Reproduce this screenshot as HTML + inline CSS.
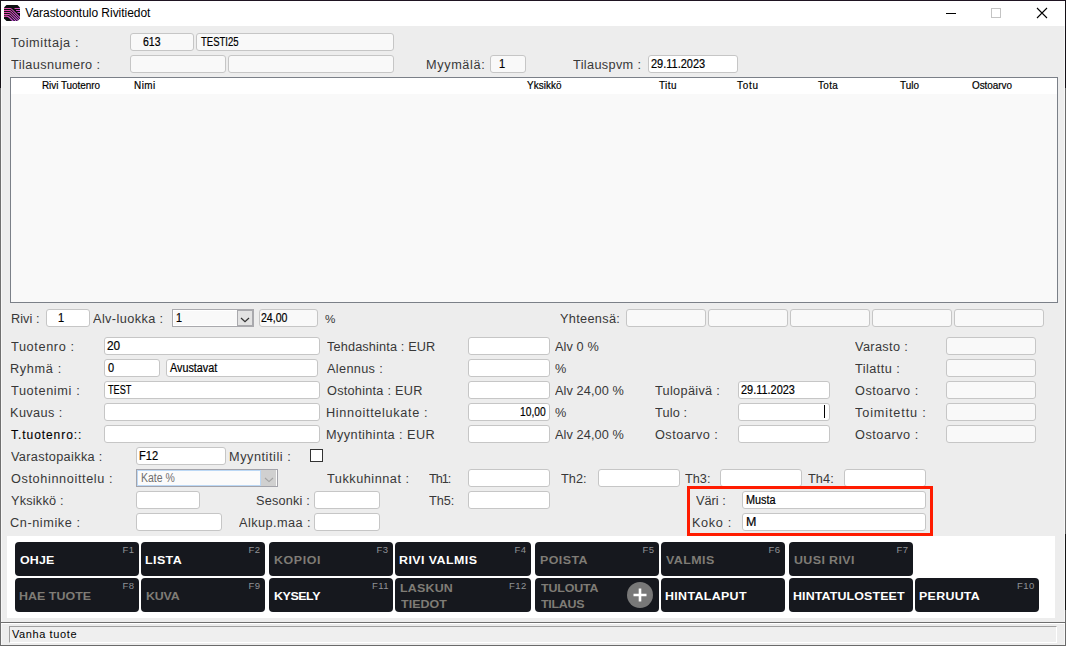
<!DOCTYPE html><html><head><meta charset="utf-8"><style>
html,body{margin:0;padding:0;}
body{width:1066px;height:646px;position:relative;overflow:hidden;background:#ededed;font-family:"Liberation Sans",sans-serif;}
.t{position:absolute;white-space:pre;}
.f{position:absolute;border:1px solid #c6c6c6;box-sizing:content-box;}
.b{position:absolute;background:#16181e;border-radius:4px;}
.a{position:absolute;}
</style></head><body>
<div class="a" style="left:0;top:0;width:1066px;height:26px;background:#fff"></div>
<div class="a" style="left:0;top:0;width:1066px;height:1px;background:#1f1422"></div>
<div class="a" style="left:0;top:0;width:1px;height:646px;background:#707070"></div>
<div class="a" style="left:0;top:0;width:1px;height:88px;background:#141016"></div>
<div class="a" style="left:1065px;top:0;width:1px;height:646px;background:#6a6a6a"></div>
<div class="a" style="left:1065px;top:0;width:1px;height:88px;background:#141016"></div>
<div class="a" style="left:1065px;top:534px;width:1px;height:76px;background:#151515"></div>
<div class="a" style="left:0;top:645px;width:1066px;height:1px;background:#6a6a6a"></div>
<div class="a" style="left:1px;top:26px;width:1px;height:619px;background:#f7f7f7"></div>
<div class="a" style="left:1064px;top:26px;width:1px;height:619px;background:#f7f7f7"></div>
<svg class="a" style="left:4px;top:5px" width="16" height="16" viewBox="0 0 16 16">
<defs><linearGradient id="g" x1="0" y1="0" x2="1" y2="0"><stop offset="0" stop-color="#e54aa0"/><stop offset="1" stop-color="#c95ae6"/></linearGradient>
<clipPath id="c"><path d="M2.5 0H13.5L16 2.5V13.5L13.5 16H2.5L0 13.5V2.5Z"/></clipPath></defs>
<path d="M2.5 0H13.5L16 2.5V13.5L13.5 16H2.5L0 13.5V2.5Z" fill="#0e0f12"/>
<g clip-path="url(#c)" stroke="url(#g)" stroke-width="1.05" fill="none">
<path d="M0 3.5H6Q7 3.5 8 4.5L20 16.5"/>
<path d="M0 5.5H5.5Q6.5 5.5 7.5 6.5L17.5 16.5"/>
<path d="M0 7.5H5Q6 7.5 7 8.5L15 16.5"/>
<path d="M0 9.5H4.5Q5.5 9.5 6.5 10.5L12.5 16.5"/>
<path d="M0 11.5Q3 10.5 5.5 12.5L9.5 16.5" stroke-width="1.3"/>
<path d="M10.5 3.5H16M12 5.5H16M13.5 7.5H16"/>
</g></svg>
<div class="a" style="left:946px;top:13px;width:10px;height:1px;background:#000"></div>
<div class="a" style="left:991px;top:8px;width:8px;height:8px;border:1px solid #c4c4c4"></div>
<svg class="a" style="left:1036px;top:7px" width="12" height="12" viewBox="0 0 12 12"><path d="M1 1L11 11M11 1L1 11" stroke="#000" stroke-width="1.1"/></svg>
<div class="f" style="left:130px;top:33px;width:62px;height:16px;background:#f9f9f9;border-radius:3px"></div>
<div class="f" style="left:196px;top:33px;width:196px;height:16px;background:#f9f9f9;border-radius:3px"></div>
<div class="f" style="left:130px;top:55px;width:94px;height:16px;background:#f9f9f9;border-radius:3px"></div>
<div class="f" style="left:228px;top:55px;width:164px;height:16px;background:#f9f9f9;border-radius:3px"></div>
<div class="f" style="left:490px;top:55px;width:34px;height:16px;background:#f9f9f9;border-radius:3px"></div>
<div class="f" style="left:648px;top:55px;width:88px;height:16px;background:#fff;border-radius:3px"></div>
<div class="a" style="left:10px;top:77px;width:1046px;height:224px;border:1px solid #7b8088;background:#f9f9f9"></div>
<div class="a" style="left:11px;top:78px;width:1046px;height:16px;background:#fff"></div>
<div class="f" style="left:46px;top:309px;width:42px;height:16px;background:#fff;border-radius:3px"></div>
<div class="a" style="left:172px;top:309px;width:80px;height:16px;border:1px solid #a9a9ad;background:#fff"></div>
<div class="a" style="left:174px;top:311px;width:63px;height:14px;background:#f9f9f9"></div>
<div class="a" style="left:237px;top:310px;width:14px;height:14px;border:1px solid #a9a9ad;background:#e3e3e3"></div>
<svg class="a" style="left:239px;top:314px" width="12" height="10" viewBox="0 0 12 10"><path d="M2 4L6 7.6L10 4" stroke="#333" stroke-width="1.25" fill="none"/></svg>
<div class="f" style="left:259px;top:309px;width:57px;height:16px;background:#f9f9f9;border-radius:3px"></div>
<div class="f" style="left:626px;top:309px;width:78px;height:16px;background:#f9f9f9;border-radius:3px"></div>
<div class="f" style="left:708px;top:309px;width:78px;height:16px;background:#f9f9f9;border-radius:3px"></div>
<div class="f" style="left:790px;top:309px;width:78px;height:16px;background:#f9f9f9;border-radius:3px"></div>
<div class="f" style="left:872px;top:309px;width:78px;height:16px;background:#f9f9f9;border-radius:3px"></div>
<div class="f" style="left:954px;top:309px;width:88px;height:16px;background:#f9f9f9;border-radius:3px"></div>
<div class="f" style="left:104px;top:337px;width:214px;height:16px;background:#fff;border-radius:3px"></div>
<div class="f" style="left:104px;top:359px;width:54px;height:16px;background:#fff;border-radius:3px"></div>
<div class="f" style="left:166px;top:359px;width:150px;height:16px;background:#fff;border-radius:3px"></div>
<div class="f" style="left:104px;top:381px;width:214px;height:16px;background:#fff;border-radius:3px"></div>
<div class="f" style="left:104px;top:403px;width:214px;height:16px;background:#fff;border-radius:3px"></div>
<div class="f" style="left:104px;top:425px;width:214px;height:16px;background:#fff;border-radius:3px"></div>
<div class="f" style="left:136px;top:447px;width:88px;height:16px;background:#fff;border-radius:3px"></div>
<div class="a" style="left:310px;top:449px;width:11px;height:11px;border:1px solid #333;background:#fff"></div>
<div class="a" style="left:136px;top:469px;width:140px;height:16px;border:1px solid #a3a3aa;background:#fbfbfb"></div>
<div class="a" style="left:137px;top:470px;width:122px;height:14px;border:1px solid #bcd8f5"></div>
<div class="a" style="left:261px;top:470px;width:15px;height:16px;background:#d0d0d0"></div>
<svg class="a" style="left:263px;top:474px" width="12" height="10" viewBox="0 0 12 10"><path d="M2 4L6 7.6L10 4" stroke="#a2a2a2" stroke-width="1.1" fill="none"/></svg>
<div class="f" style="left:136px;top:491px;width:62px;height:16px;background:#fff;border-radius:3px"></div>
<div class="f" style="left:136px;top:513px;width:84px;height:16px;background:#fff;border-radius:3px"></div>
<div class="f" style="left:314px;top:491px;width:64px;height:16px;background:#fff;border-radius:3px"></div>
<div class="f" style="left:314px;top:513px;width:64px;height:16px;background:#fff;border-radius:3px"></div>
<div class="f" style="left:468px;top:337px;width:80px;height:16px;background:#fff;border-radius:3px"></div>
<div class="f" style="left:468px;top:359px;width:80px;height:16px;background:#fff;border-radius:3px"></div>
<div class="f" style="left:468px;top:381px;width:80px;height:16px;background:#fff;border-radius:3px"></div>
<div class="f" style="left:468px;top:403px;width:80px;height:16px;background:#fff;border-radius:3px"></div>
<div class="f" style="left:468px;top:425px;width:80px;height:16px;background:#fff;border-radius:3px"></div>
<div class="f" style="left:468px;top:469px;width:80px;height:16px;background:#fff;border-radius:3px"></div>
<div class="f" style="left:468px;top:491px;width:80px;height:16px;background:#fff;border-radius:3px"></div>
<div class="f" style="left:598px;top:469px;width:80px;height:16px;background:#fff;border-radius:3px"></div>
<div class="f" style="left:720px;top:469px;width:80px;height:16px;background:#fff;border-radius:3px"></div>
<div class="f" style="left:844px;top:469px;width:80px;height:16px;background:#fff;border-radius:3px"></div>
<div class="f" style="left:738px;top:381px;width:90px;height:16px;background:#fff;border-radius:3px"></div>
<div class="f" style="left:738px;top:403px;width:90px;height:16px;background:#fff;border-radius:3px"></div>
<div class="a" style="left:824px;top:405px;width:1px;height:13px;background:#000"></div>
<div class="f" style="left:738px;top:425px;width:90px;height:16px;background:#fff;border-radius:3px"></div>
<div class="f" style="left:946px;top:337px;width:88px;height:16px;background:#f9f9f9;border-radius:3px"></div>
<div class="f" style="left:946px;top:359px;width:88px;height:16px;background:#f9f9f9;border-radius:3px"></div>
<div class="f" style="left:946px;top:381px;width:88px;height:16px;background:#f9f9f9;border-radius:3px"></div>
<div class="f" style="left:946px;top:403px;width:88px;height:16px;background:#f9f9f9;border-radius:3px"></div>
<div class="f" style="left:946px;top:425px;width:88px;height:16px;background:#f9f9f9;border-radius:3px"></div>
<div class="f" style="left:742px;top:491px;width:182px;height:16px;background:#fff;border-radius:3px"></div>
<div class="f" style="left:742px;top:513px;width:182px;height:16px;background:#fff;border-radius:3px"></div>
<div class="a" style="left:7px;top:536px;width:1048px;height:82px;background:#fff"></div>
<div class="a" style="left:687px;top:486px;width:240px;height:44px;border:3px solid #ff1c00"></div>
<div class="b" style="left:15px;top:542px;width:124px;height:34px"></div>
<div class="b" style="left:141px;top:542px;width:124px;height:34px"></div>
<div class="b" style="left:269px;top:542px;width:124px;height:34px"></div>
<div class="b" style="left:395px;top:542px;width:136px;height:34px"></div>
<div class="b" style="left:535px;top:542px;width:124px;height:34px"></div>
<div class="b" style="left:661px;top:542px;width:124px;height:34px"></div>
<div class="b" style="left:789px;top:542px;width:124px;height:34px"></div>
<div class="b" style="left:15px;top:578px;width:124px;height:34px"></div>
<div class="b" style="left:141px;top:578px;width:124px;height:34px"></div>
<div class="b" style="left:269px;top:578px;width:124px;height:34px"></div>
<div class="b" style="left:395px;top:578px;width:136px;height:34px"></div>
<div class="b" style="left:535px;top:578px;width:124px;height:34px"></div>
<svg class="a" style="left:627px;top:582px" width="26" height="26" viewBox="0 0 26 26"><circle cx="13" cy="13" r="13" fill="#787878"/><path d="M13 6.5V19.5M6.5 13H19.5" stroke="#fff" stroke-width="2.6"/></svg>
<div class="b" style="left:661px;top:578px;width:124px;height:34px"></div>
<div class="b" style="left:789px;top:578px;width:124px;height:34px"></div>
<div class="b" style="left:915px;top:578px;width:124px;height:34px"></div>
<div class="a" style="left:1px;top:622px;width:1064px;height:1px;background:#6e6e6e"></div>
<div class="a" style="left:1px;top:623px;width:1064px;height:1px;background:#fff"></div>
<div class="a" style="left:9px;top:626px;width:1046px;height:15px;background:#efefef;border-top:1px solid #a0a0a0;border-left:1px solid #a0a0a0;border-right:1px solid #fff;border-bottom:1px solid #fff"></div>
<div class="t" style="left:25.30px;top:6.00px;font-size:12px;line-height:15px;color:#000;letter-spacing:-0.030px;">Varastoontulo Rivitiedot</div>
<div class="t" style="left:11.30px;top:36.00px;font-size:12px;line-height:15px;color:#383838;letter-spacing:0.569px;transform:scaleX(1.0600);transform-origin:0 0;">Toimittaja :</div>
<div class="t" style="left:142.83px;top:35.00px;font-size:12px;line-height:15px;color:#000;transform:scaleX(0.8737);transform-origin:0 0;-webkit-text-stroke:0.2px currentColor;">613</div>
<div class="t" style="left:201.00px;top:35.00px;font-size:12px;line-height:15px;color:#000;transform:scaleX(0.7936);transform-origin:0 0;-webkit-text-stroke:0.2px currentColor;">TESTI25</div>
<div class="t" style="left:11.30px;top:58.00px;font-size:12px;line-height:15px;color:#383838;letter-spacing:0.393px;transform:scaleX(1.0600);transform-origin:0 0;">Tilausnumero :</div>
<div class="t" style="left:426.44px;top:58.00px;font-size:12px;line-height:15px;color:#383838;letter-spacing:0.574px;transform:scaleX(1.0600);transform-origin:0 0;">Myymälä:</div>
<div class="t" style="left:499.48px;top:57.00px;font-size:12px;line-height:15px;color:#000;transform:scaleX(0.9200);transform-origin:0 0;-webkit-text-stroke:0.2px currentColor;">1</div>
<div class="t" style="left:573.00px;top:58.00px;font-size:12px;line-height:15px;color:#383838;letter-spacing:0.321px;transform:scaleX(1.0600);transform-origin:0 0;">Tilauspvm :</div>
<div class="t" style="left:651.28px;top:57.00px;font-size:12px;line-height:15px;color:#000;transform:scaleX(0.9155);transform-origin:0 0;-webkit-text-stroke:0.2px currentColor;">29.11.2023</div>
<div class="t" style="left:42.10px;top:78.00px;font-size:11px;line-height:14px;color:#000;letter-spacing:-0.037px;transform:scaleX(0.9000);transform-origin:0 0;-webkit-text-stroke:0.2px #000;">Rivi Tuotenro</div>
<div class="t" style="left:133.90px;top:78.00px;font-size:11px;line-height:14px;color:#000;letter-spacing:0.556px;transform:scaleX(0.9000);transform-origin:0 0;-webkit-text-stroke:0.2px #000;">Nimi</div>
<div class="t" style="left:527.00px;top:78.00px;font-size:11px;line-height:14px;color:#000;letter-spacing:0.093px;transform:scaleX(0.9000);transform-origin:0 0;-webkit-text-stroke:0.2px #000;">Yksikkö</div>
<div class="t" style="left:659.40px;top:78.00px;font-size:11px;line-height:14px;color:#000;letter-spacing:0.481px;transform:scaleX(0.9000);transform-origin:0 0;-webkit-text-stroke:0.2px #000;">Titu</div>
<div class="t" style="left:737.20px;top:78.00px;font-size:11px;line-height:14px;color:#000;letter-spacing:0.815px;transform:scaleX(0.9000);transform-origin:0 0;-webkit-text-stroke:0.2px #000;">Totu</div>
<div class="t" style="left:818.00px;top:78.00px;font-size:11px;line-height:14px;color:#000;letter-spacing:0.407px;transform:scaleX(0.9000);transform-origin:0 0;-webkit-text-stroke:0.2px #000;">Tota</div>
<div class="t" style="left:899.50px;top:78.00px;font-size:11px;line-height:14px;color:#000;letter-spacing:0.074px;transform:scaleX(0.9000);transform-origin:0 0;-webkit-text-stroke:0.2px #000;">Tulo</div>
<div class="t" style="left:972.00px;top:78.00px;font-size:11px;line-height:14px;color:#000;letter-spacing:-0.032px;transform:scaleX(0.9000);transform-origin:0 0;-webkit-text-stroke:0.2px #000;">Ostoarvo</div>
<div class="t" style="left:10.74px;top:312.00px;font-size:12px;line-height:15px;color:#383838;letter-spacing:0.038px;transform:scaleX(1.0600);transform-origin:0 0;">Rivi :</div>
<div class="t" style="left:58.48px;top:311.00px;font-size:12px;line-height:15px;color:#000;transform:scaleX(0.9200);transform-origin:0 0;-webkit-text-stroke:0.2px currentColor;">1</div>
<div class="t" style="left:93.40px;top:312.00px;font-size:12px;line-height:15px;color:#383838;letter-spacing:0.372px;transform:scaleX(1.0600);transform-origin:0 0;">Alv-luokka :</div>
<div class="t" style="left:176.00px;top:311.00px;font-size:12px;line-height:15px;color:#000;transform:scaleX(0.9000);transform-origin:0 0;-webkit-text-stroke:0.2px currentColor;">1</div>
<div class="t" style="left:261.12px;top:311.00px;font-size:12px;line-height:15px;color:#000;transform:scaleX(0.8793);transform-origin:0 0;-webkit-text-stroke:0.2px currentColor;">24,00</div>
<div class="t" style="left:325.00px;top:312.00px;font-size:11px;line-height:14px;color:#383838;transform:scaleX(1.0600);transform-origin:0 0;">%</div>
<div class="t" style="left:559.80px;top:312.00px;font-size:12px;line-height:15px;color:#383838;letter-spacing:0.297px;transform:scaleX(1.0600);transform-origin:0 0;">Yhteensä:</div>
<div class="t" style="left:11.30px;top:340.00px;font-size:12px;line-height:15px;color:#383838;letter-spacing:0.589px;transform:scaleX(1.0600);transform-origin:0 0;">Tuotenro :</div>
<div class="t" style="left:10.24px;top:362.00px;font-size:12px;line-height:15px;color:#383838;letter-spacing:0.616px;transform:scaleX(1.0600);transform-origin:0 0;">Ryhmä :</div>
<div class="t" style="left:11.30px;top:384.00px;font-size:12px;line-height:15px;color:#383838;letter-spacing:0.587px;transform:scaleX(1.0600);transform-origin:0 0;">Tuotenimi :</div>
<div class="t" style="left:10.24px;top:406.00px;font-size:12px;line-height:15px;color:#383838;letter-spacing:0.377px;transform:scaleX(1.0600);transform-origin:0 0;">Kuvaus :</div>
<div class="t" style="left:11.10px;top:428.00px;font-size:12px;line-height:15px;color:#000;letter-spacing:0.927px;-webkit-text-stroke:0.12px #000;">T.tuotenro::</div>
<div class="t" style="left:11.30px;top:450.00px;font-size:12px;line-height:15px;color:#383838;letter-spacing:0.313px;transform:scaleX(1.0600);transform-origin:0 0;">Varastopaikka :</div>
<div class="t" style="left:11.30px;top:472.00px;font-size:12px;line-height:15px;color:#383838;letter-spacing:0.574px;transform:scaleX(1.0600);transform-origin:0 0;">Ostohinnoittelu :</div>
<div class="t" style="left:11.30px;top:494.00px;font-size:12px;line-height:15px;color:#383838;letter-spacing:0.186px;transform:scaleX(1.0600);transform-origin:0 0;">Yksikkö :</div>
<div class="t" style="left:10.24px;top:516.00px;font-size:12px;line-height:15px;color:#383838;letter-spacing:0.543px;transform:scaleX(1.0600);transform-origin:0 0;">Cn-nimike :</div>
<div class="t" style="left:107.02px;top:339.00px;font-size:12px;line-height:15px;color:#000;transform:scaleX(0.9833);transform-origin:0 0;-webkit-text-stroke:0.2px currentColor;">20</div>
<div class="t" style="left:108.00px;top:361.00px;font-size:12px;line-height:15px;color:#000;transform:scaleX(0.9167);transform-origin:0 0;-webkit-text-stroke:0.2px currentColor;">0</div>
<div class="t" style="left:170.00px;top:361.00px;font-size:12px;line-height:15px;color:#000;transform:scaleX(0.9000);transform-origin:0 0;-webkit-text-stroke:0.2px currentColor;">Avustavat</div>
<div class="t" style="left:108.00px;top:383.00px;font-size:12px;line-height:15px;color:#000;transform:scaleX(0.7645);transform-origin:0 0;-webkit-text-stroke:0.2px currentColor;">TEST</div>
<div class="t" style="left:139.38px;top:449.00px;font-size:12px;line-height:15px;color:#000;transform:scaleX(0.9211);transform-origin:0 0;-webkit-text-stroke:0.2px currentColor;">F12</div>
<div class="t" style="left:229.24px;top:450.00px;font-size:12px;line-height:15px;color:#383838;letter-spacing:0.509px;transform:scaleX(1.0600);transform-origin:0 0;">Myyntitili :</div>
<div class="t" style="left:140.93px;top:471.00px;font-size:12px;line-height:15px;color:#6e6e6e;transform:scaleX(0.8730);transform-origin:0 0;">Kate %</div>
<div class="t" style="left:256.24px;top:494.00px;font-size:12px;line-height:15px;color:#383838;letter-spacing:0.163px;transform:scaleX(1.0600);transform-origin:0 0;">Sesonki :</div>
<div class="t" style="left:238.50px;top:516.00px;font-size:12px;line-height:15px;color:#383838;letter-spacing:0.404px;transform:scaleX(1.0600);transform-origin:0 0;">Alkup.maa :</div>
<div class="t" style="left:327.20px;top:340.00px;font-size:12px;line-height:15px;color:#383838;letter-spacing:0.130px;transform:scaleX(1.0600);transform-origin:0 0;">Tehdashinta : EUR</div>
<div class="t" style="left:327.20px;top:362.00px;font-size:12px;line-height:15px;color:#383838;letter-spacing:0.314px;transform:scaleX(1.0600);transform-origin:0 0;">Alennus :</div>
<div class="t" style="left:327.20px;top:384.00px;font-size:12px;line-height:15px;color:#383838;letter-spacing:0.232px;transform:scaleX(1.0600);transform-origin:0 0;">Ostohinta : EUR</div>
<div class="t" style="left:326.14px;top:406.00px;font-size:12px;line-height:15px;color:#383838;letter-spacing:0.611px;transform:scaleX(1.0600);transform-origin:0 0;">Hinnoittelukate :</div>
<div class="t" style="left:326.14px;top:428.00px;font-size:12px;line-height:15px;color:#383838;letter-spacing:0.410px;transform:scaleX(1.0600);transform-origin:0 0;">Myyntihinta : EUR</div>
<div class="t" style="left:555.00px;top:340.00px;font-size:12px;line-height:15px;color:#383838;letter-spacing:0.094px;transform:scaleX(1.0600);transform-origin:0 0;">Alv 0 %</div>
<div class="t" style="left:555.00px;top:362.00px;font-size:12px;line-height:15px;color:#383838;transform:scaleX(1.0600);transform-origin:0 0;">%</div>
<div class="t" style="left:555.00px;top:384.00px;font-size:12px;line-height:15px;color:#383838;letter-spacing:0.091px;transform:scaleX(1.0600);transform-origin:0 0;">Alv 24,00 %</div>
<div class="t" style="left:555.00px;top:406.00px;font-size:12px;line-height:15px;color:#383838;transform:scaleX(1.0600);transform-origin:0 0;">%</div>
<div class="t" style="left:555.00px;top:428.00px;font-size:12px;line-height:15px;color:#383838;letter-spacing:0.091px;transform:scaleX(1.0600);transform-origin:0 0;">Alv 24,00 %</div>
<div class="t" style="left:519.74px;top:405.00px;font-size:12px;line-height:15px;color:#000;transform:scaleX(0.8552);transform-origin:0 0;-webkit-text-stroke:0.2px currentColor;">10,00</div>
<div class="t" style="left:327.30px;top:472.00px;font-size:12px;line-height:15px;color:#383838;letter-spacing:0.483px;transform:scaleX(1.0600);transform-origin:0 0;">Tukkuhinnat :</div>
<div class="t" style="left:429.20px;top:472.00px;font-size:12px;line-height:15px;color:#383838;letter-spacing:-0.969px;transform:scaleX(1.0600);transform-origin:0 0;">Th1:</div>
<div class="t" style="left:429.20px;top:494.00px;font-size:12px;line-height:15px;color:#383838;letter-spacing:-0.088px;transform:scaleX(1.0600);transform-origin:0 0;">Th5:</div>
<div class="t" style="left:561.30px;top:472.00px;font-size:12px;line-height:15px;color:#383838;letter-spacing:0.038px;transform:scaleX(1.0600);transform-origin:0 0;">Th2:</div>
<div class="t" style="left:685.40px;top:472.00px;font-size:12px;line-height:15px;color:#383838;letter-spacing:0.006px;transform:scaleX(1.0600);transform-origin:0 0;">Th3:</div>
<div class="t" style="left:807.90px;top:472.00px;font-size:12px;line-height:15px;color:#383838;letter-spacing:0.069px;transform:scaleX(1.0600);transform-origin:0 0;">Th4:</div>
<div class="t" style="left:655.30px;top:384.00px;font-size:12px;line-height:15px;color:#383838;letter-spacing:0.291px;transform:scaleX(1.0600);transform-origin:0 0;">Tulopäivä :</div>
<div class="t" style="left:741.29px;top:383.00px;font-size:12px;line-height:15px;color:#000;transform:scaleX(0.9103);transform-origin:0 0;-webkit-text-stroke:0.2px currentColor;">29.11.2023</div>
<div class="t" style="left:655.30px;top:406.00px;font-size:12px;line-height:15px;color:#383838;letter-spacing:0.143px;transform:scaleX(1.0600);transform-origin:0 0;">Tulo :</div>
<div class="t" style="left:655.30px;top:428.00px;font-size:12px;line-height:15px;color:#383838;letter-spacing:0.436px;transform:scaleX(1.0600);transform-origin:0 0;">Ostoarvo :</div>
<div class="t" style="left:855.20px;top:340.00px;font-size:12px;line-height:15px;color:#383838;letter-spacing:0.335px;transform:scaleX(1.0600);transform-origin:0 0;">Varasto :</div>
<div class="t" style="left:855.20px;top:362.00px;font-size:12px;line-height:15px;color:#383838;letter-spacing:0.415px;transform:scaleX(1.0600);transform-origin:0 0;">Tilattu :</div>
<div class="t" style="left:855.20px;top:384.00px;font-size:12px;line-height:15px;color:#383838;letter-spacing:0.478px;transform:scaleX(1.0600);transform-origin:0 0;">Ostoarvo :</div>
<div class="t" style="left:855.20px;top:406.00px;font-size:12px;line-height:15px;color:#383838;letter-spacing:0.804px;transform:scaleX(1.0600);transform-origin:0 0;">Toimitettu :</div>
<div class="t" style="left:855.20px;top:428.00px;font-size:12px;line-height:15px;color:#383838;letter-spacing:0.478px;transform:scaleX(1.0600);transform-origin:0 0;">Ostoarvo :</div>
<div class="t" style="left:696.20px;top:494.00px;font-size:12px;line-height:15px;color:#383838;letter-spacing:-0.004px;transform:scaleX(1.0600);transform-origin:0 0;">Väri :</div>
<div class="t" style="left:745.79px;top:493.00px;font-size:12px;line-height:15px;color:#000;transform:scaleX(0.9062);transform-origin:0 0;-webkit-text-stroke:0.2px currentColor;">Musta</div>
<div class="t" style="left:692.34px;top:516.00px;font-size:12px;line-height:15px;color:#383838;letter-spacing:0.600px;transform:scaleX(1.0600);transform-origin:0 0;">Koko :</div>
<div class="t" style="left:745.66px;top:515.00px;font-size:12px;line-height:15px;color:#000;transform:scaleX(1.0375);transform-origin:0 0;-webkit-text-stroke:0.2px currentColor;">M</div>
<div class="t" style="left:20.10px;top:553.00px;font-size:11.5px;line-height:14px;color:#ffffff;font-weight:700;letter-spacing:0.130px;transform:scaleX(1.0800);transform-origin:0 0;">OHJE</div>
<div class="t" style="left:122.45px;top:544.00px;font-size:9.5px;line-height:12px;color:#909296;letter-spacing:0.550px;">F1</div>
<div class="t" style="left:145.22px;top:553.00px;font-size:11.5px;line-height:14px;color:#ffffff;font-weight:700;letter-spacing:0.398px;transform:scaleX(1.0800);transform-origin:0 0;">LISTA</div>
<div class="t" style="left:248.45px;top:544.00px;font-size:9.5px;line-height:12px;color:#909296;letter-spacing:0.550px;">F2</div>
<div class="t" style="left:273.52px;top:553.00px;font-size:11.5px;line-height:14px;color:#7f7c76;font-weight:700;letter-spacing:0.552px;transform:scaleX(1.0800);transform-origin:0 0;">KOPIOI</div>
<div class="t" style="left:376.45px;top:544.00px;font-size:9.5px;line-height:12px;color:#909296;letter-spacing:0.550px;">F3</div>
<div class="t" style="left:398.92px;top:553.00px;font-size:11.5px;line-height:14px;color:#ffffff;font-weight:700;letter-spacing:0.402px;transform:scaleX(1.0800);transform-origin:0 0;">RIVI VALMIS</div>
<div class="t" style="left:514.45px;top:544.00px;font-size:9.5px;line-height:12px;color:#909296;letter-spacing:0.550px;">F4</div>
<div class="t" style="left:539.52px;top:553.00px;font-size:11.5px;line-height:14px;color:#7f7c76;font-weight:700;letter-spacing:0.411px;transform:scaleX(1.0800);transform-origin:0 0;">POISTA</div>
<div class="t" style="left:642.45px;top:544.00px;font-size:9.5px;line-height:12px;color:#909296;letter-spacing:0.550px;">F5</div>
<div class="t" style="left:666.20px;top:553.00px;font-size:11.5px;line-height:14px;color:#7f7c76;font-weight:700;letter-spacing:0.415px;transform:scaleX(1.0800);transform-origin:0 0;">VALMIS</div>
<div class="t" style="left:768.45px;top:544.00px;font-size:9.5px;line-height:12px;color:#909296;letter-spacing:0.550px;">F6</div>
<div class="t" style="left:793.52px;top:553.00px;font-size:11.5px;line-height:14px;color:#7f7c76;font-weight:700;letter-spacing:0.361px;transform:scaleX(1.0800);transform-origin:0 0;">UUSI RIVI</div>
<div class="t" style="left:896.45px;top:544.00px;font-size:9.5px;line-height:12px;color:#909296;letter-spacing:0.550px;">F7</div>
<div class="t" style="left:19.22px;top:589.00px;font-size:11.5px;line-height:14px;color:#7f7c76;font-weight:700;letter-spacing:0.035px;transform:scaleX(1.0800);transform-origin:0 0;">HAE TUOTE</div>
<div class="t" style="left:122.45px;top:580.00px;font-size:9.5px;line-height:12px;color:#909296;letter-spacing:0.550px;">F8</div>
<div class="t" style="left:145.82px;top:589.00px;font-size:11.5px;line-height:14px;color:#7f7c76;font-weight:700;letter-spacing:-0.179px;transform:scaleX(1.0800);transform-origin:0 0;">KUVA</div>
<div class="t" style="left:248.45px;top:580.00px;font-size:9.5px;line-height:12px;color:#909296;letter-spacing:0.550px;">F9</div>
<div class="t" style="left:273.52px;top:589.00px;font-size:11.5px;line-height:14px;color:#ffffff;font-weight:700;letter-spacing:-0.393px;transform:scaleX(1.0800);transform-origin:0 0;">KYSELY</div>
<div class="t" style="left:371.90px;top:580.00px;font-size:9.5px;line-height:12px;color:#909296;letter-spacing:0.550px;">F11</div>
<div class="t" style="left:399.62px;top:581.00px;font-size:11.5px;line-height:14px;color:#7f7c76;font-weight:700;letter-spacing:0.189px;transform:scaleX(1.0800);transform-origin:0 0;">LASKUN</div>
<div class="t" style="left:400.70px;top:597.00px;font-size:11.5px;line-height:14px;color:#7f7c76;font-weight:700;letter-spacing:0.044px;transform:scaleX(1.0800);transform-origin:0 0;">TIEDOT</div>
<div class="t" style="left:508.90px;top:580.00px;font-size:9.5px;line-height:12px;color:#909296;letter-spacing:0.550px;">F12</div>
<div class="t" style="left:540.60px;top:581.00px;font-size:11.5px;line-height:14px;color:#7f7c76;font-weight:700;letter-spacing:-0.142px;transform:scaleX(1.0800);transform-origin:0 0;">TULOUTA</div>
<div class="t" style="left:540.60px;top:597.00px;font-size:11.5px;line-height:14px;color:#7f7c76;font-weight:700;letter-spacing:-0.256px;transform:scaleX(1.0800);transform-origin:0 0;">TILAUS</div>
<div class="t" style="left:665.42px;top:589.00px;font-size:11.5px;line-height:14px;color:#ffffff;font-weight:700;letter-spacing:0.313px;transform:scaleX(1.0800);transform-origin:0 0;">HINTALAPUT</div>
<div class="t" style="left:793.22px;top:589.00px;font-size:11.5px;line-height:14px;color:#ffffff;font-weight:700;letter-spacing:0.115px;transform:scaleX(1.0800);transform-origin:0 0;">HINTATULOSTEET</div>
<div class="t" style="left:919.12px;top:589.00px;font-size:11.5px;line-height:14px;color:#ffffff;font-weight:700;letter-spacing:0.259px;transform:scaleX(1.0800);transform-origin:0 0;">PERUUTA</div>
<div class="t" style="left:1016.90px;top:580.00px;font-size:9.5px;line-height:12px;color:#909296;letter-spacing:0.550px;">F10</div>
<div class="t" style="left:11.90px;top:627.00px;font-size:11px;line-height:14px;color:#000;letter-spacing:0.610px;">Vanha tuote</div>
</body></html>
